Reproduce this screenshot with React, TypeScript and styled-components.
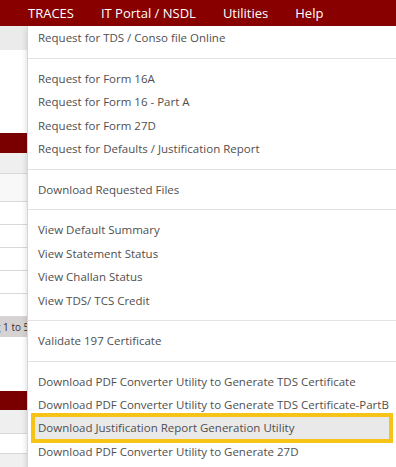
import React from "react";
import styled, { createGlobalStyle } from "styled-components";

const GlobalStyle = createGlobalStyle`
  html, body {
    margin: 0;
    padding: 0;
  }
  body {
    font-family: "Open Sans", "Noto Sans", sans-serif;
    background: #fff;
    overflow: hidden;
  }
`;

const Page = styled.div`
  position: relative;
  width: 396px;
  height: 467px;
  overflow: hidden;
  background: #fff;
`;

const TopBar = styled.nav`
  height: 26px;
  background: #880000;
  display: flex;
  gap: 27px;
  padding-left: 28px;
`;

const TopLink = styled.span`
  color: #fff;
  font-size: 13px;
  line-height: 26px;
  white-space: nowrap;
`;

const Breadcrumb = styled.div`
  height: 24px;
  background: #ebebeb;
`;

const Spacer = styled.div<{ $h: number }>`
  height: ${(p) => p.$h}px;
`;

const GridHead = styled.div<{ $h: number }>`
  height: ${(p) => p.$h}px;
  background: #7a0000;
`;

const GridRow = styled.div<{ $h: number; $bg?: string }>`
  display: grid;
  grid-template-columns: 135px 91px 69px 71px 1fr;
  height: ${(p) => p.$h}px;
  background: ${(p) => p.$bg || "#fff"};
  border-bottom: 1px solid #d9d9d9;
`;

const Cell = styled.div`
  border-left: 1px solid #d6d6d6;
  &:first-child {
    border-left: none;
  }
`;

const Pager = styled.div`
  height: 20px;
  line-height: 21px;
  background: #d6d2d2;
  color: #333;
  font-size: 10px;
  white-space: nowrap;
  text-indent: -39px;
`;

const Menu = styled.div`
  position: absolute;
  top: 26px;
  left: 27px;
  width: 368px;
  background: #fff;
  border-left: 1px solid #d6d6d6;
  box-shadow: 0 3px 6px rgba(0, 0, 0, 0.16);
`;

const Group = styled.div`
  padding: 8px 0;
  &:first-child {
    padding-top: 0;
  }
  & + & {
    border-top: 1px solid #e3e3e3;
  }
`;

const Item = styled.div<{ $active?: boolean }>`
  height: 23.5px;
  line-height: 23.5px;
  padding: 0 10px;
  font-size: 11.5px;
  color: #4f4f4f;
  white-space: nowrap;
  ${(p) =>
    p.$active &&
    `
    height: 22px;
    line-height: 22px;
    margin: -4px 3px -2.5px;
    padding: 0 3px;
    border: 4px solid #f6c317;
    background: #e9e9e9;
  `}
`;

const groups: string[][] = [
  ["Request for TDS / Conso file Online"],
  [
    "Request for Form 16A",
    "Request for Form 16 - Part A",
    "Request for Form 27D",
    "Request for Defaults / Justification Report",
  ],
  ["Download Requested Files"],
  ["View Default Summary", "View Statement Status", "View Challan Status", "View TDS/ TCS Credit"],
  ["Validate 197 Certificate"],
  [
    "Download PDF Converter Utility to Generate TDS Certificate",
    "Download PDF Converter Utility to Generate TDS Certificate-PartB",
    "Download Justification Report Generation Utility",
    "Download PDF Converter Utility to Generate 27D",
  ],
];

const Row = ({ h, bg }: { h: number; bg?: string }) => (
  <GridRow $h={h} $bg={bg}>
    <Cell />
    <Cell />
    <Cell />
    <Cell />
    <Cell />
  </GridRow>
);

export default function App() {
  return (
    <Page>
      <GlobalStyle />
      <TopBar>
        <TopLink>TRACES</TopLink>
        <TopLink>IT Portal / NSDL</TopLink>
        <TopLink>Utilities</TopLink>
        <TopLink>Help</TopLink>
      </TopBar>
      <Breadcrumb />
      <Spacer $h={83} />
      <GridHead $h={20} />
      <Row h={20} bg="#efefef" />
      <Row h={27} bg="#f8f8f8" />
      <Row h={22} />
      <Row h={22} />
      <Row h={22} />
      <Row h={22} />
      <Row h={22} />
      <Pager>Showing 1 to 5 of 5 entries</Pager>
      <Spacer $h={54} />
      <GridHead $h={19} />
      <Row h={23} bg="#efefef" />
      <Row h={19} />
      <Row h={20} bg="#f0f0f0" />

      <Menu>
        {groups.map((items, gi) => (
          <Group key={gi}>
            {items.map((label) => (
              <Item key={label} $active={label.startsWith("Download Justification")}>
                {label}
              </Item>
            ))}
          </Group>
        ))}
      </Menu>
    </Page>
  );
}
